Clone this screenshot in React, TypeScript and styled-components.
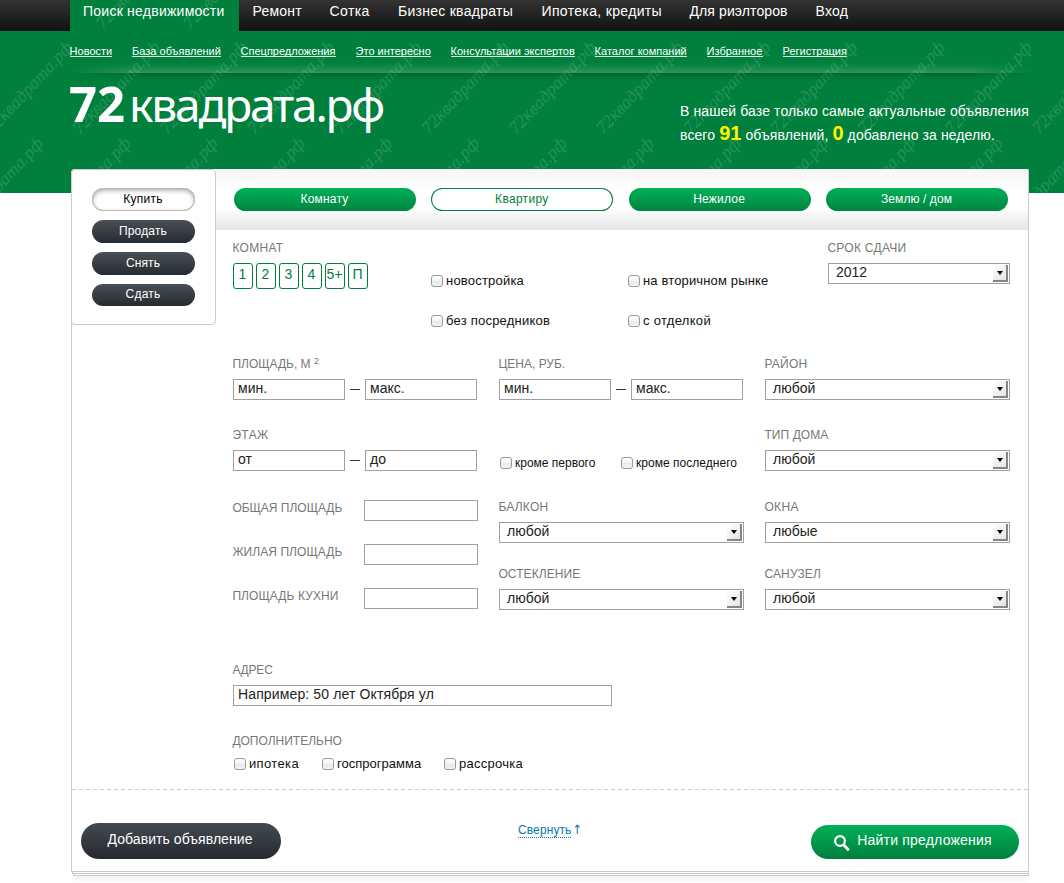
import React from 'react';
import styled, { createGlobalStyle, css } from 'styled-components';

const GREEN = '#00803c';

const GlobalStyle = createGlobalStyle`
  *, *::before, *::after { box-sizing: border-box; }
  body {
    margin: 0;
    background: #fff;
    color: #222;
    font-family: "Liberation Sans", Arial, sans-serif;
    font-size: 14px;
  }
  button, input { font-family: inherit; }
`;

const Page = styled.div`
  position: relative;
  width: 1064px;
  height: 883px;
  overflow: hidden;
  background: linear-gradient(${GREEN} 193px, #fff 193px);
`;

const PatternLayer = styled.svg`
  position: absolute;
  left: 0;
  top: 0;
  pointer-events: none;
  font: italic 18px "Liberation Serif", serif;
  fill: #fff;
  fill-opacity: 0.13;
  stroke: #fff;
  stroke-opacity: 0.05;
  stroke-width: 0.8px;
`;

const Stack = styled.div`
  position: relative;
`;

const TopBar = styled.nav`
  display: flex;
  gap: 28px;
  height: 31px;
  padding-left: 70px;
  background: linear-gradient(#333 0, #111 100%);
`;

const TopLink = styled.a<{ $ls: number; $w: number; $active?: boolean }>`
  position: relative;
  width: ${(p) => p.$w}px;
  padding-top: 3px;
  line-height: 16px;
  letter-spacing: ${(p) => p.$ls}px;
  white-space: nowrap;
  color: #fff;
  ${(p) =>
    p.$active &&
    css`
      width: 169px;
      margin-right: -14.5px;
      padding-left: 13px;
      overflow: hidden;
      background: ${GREEN};
    `}
`;

const SubNav = styled.nav`
  display: flex;
  gap: 20px;
  height: 42px;
  padding: 14px 0 0 69.6px;
`;

const SubLink = styled.a<{ $w: number }>`
  width: ${(p) => p.$w}px;
  height: 12px;
  border-bottom: 1px solid #d9ece1;
  font-size: 11px;
  line-height: 13px;
  white-space: nowrap;
  color: #fff;
`;

const Divider = styled.div`
  height: 18px;
  margin: -10px 30px -8px 70px;
  background: linear-gradient(
    rgba(255, 255, 255, 0) 0,
    rgba(255, 255, 255, 0.17) 10px,
    rgba(0, 40, 10, 0.25) 10px,
    rgba(0, 40, 10, 0) 18px
  );
  mask-image: linear-gradient(90deg, transparent, #000 60px, #000 calc(100% - 60px), transparent);
`;

const Hero = styled.header`
  display: flex;
  justify-content: space-between;
  height: 96px;
  padding: 0 30px 0 69px;
  color: #fff;
`;

const Logo = styled.div`
  display: flex;
  align-items: baseline;
  height: 60px;
  font-family: "Noto Sans", "Open Sans", sans-serif;
  font-size: 46px;
  line-height: 60px;
  letter-spacing: -2.2px;
  white-space: nowrap;
`;

const LogoNumber = styled.b`
  margin-right: 4px;
  font-size: 49px;
  letter-spacing: 0;
`;

const Stats = styled.p`
  width: 354px;
  margin: 26px 0 0;
  line-height: 24px;
  letter-spacing: 0.1px;
  white-space: nowrap;
`;

const StatValue = styled.b`
  font-size: 20px;
  line-height: 20px;
  letter-spacing: 0;
  color: #fff200;
`;

const Panel = styled.main`
  width: 958px;
  height: 703px;
  margin-left: 71px;
  border: 1px solid #ccc;
  border-top: 0;
  border-radius: 4px 2px 0 0;
  background: #fff;
`;

const PanelBody = styled.div`
  display: flex;
  height: 620px;
`;

const SideMenu = styled.aside`
  display: flex;
  flex-direction: column;
  align-items: center;
  gap: 9px;
  width: 145px;
  height: 156px;
  margin-left: -1px;
  padding-top: 18px;
  border: 1px solid #ccc;
  border-radius: 4px;
  background: #fff;
`;

const Pill = styled.button`
  flex: none;
  height: 23px;
  padding: 0 1px 1px 0;
  border: 0;
  border-radius: 12px;
  font-size: 12px;
  line-height: 22px;
  color: #fff;
  text-align: center;
`;

const SideButton = styled(Pill)<{ $active?: boolean; $ls: number }>`
  width: 103px;
  letter-spacing: ${(p) => p.$ls}px;
  background: linear-gradient(#484f55, #262b31);
  &:last-child {
    height: 22px;
    line-height: 21px;
  }
  ${(p) =>
    p.$active &&
    css`
      color: #000;
      background: #fff;
      box-shadow: inset 0 0 0 1px #bbb, inset 0 2px 5px rgba(0, 0, 0, 0.4);
    `}
`;

const Main = styled.section`
  flex: 1;
`;

const TypeTabs = styled.div`
  display: flex;
  justify-content: space-between;
  height: 61px;
  padding: 19px 20px 0 18px;
  background: linear-gradient(#f5f5f5 0, #fff 22px, #fff 38px, #e5e5e5 100%);
`;

const TypeTab = styled(Pill)<{ $active?: boolean; $ls: number }>`
  width: 182px;
  letter-spacing: ${(p) => p.$ls}px;
  background: linear-gradient(#00b058, #008540);
  ${(p) =>
    p.$active &&
    css`
      color: ${GREEN};
      background: #fff;
      box-shadow: inset 0 0 0 1px ${GREEN};
    `}
`;

const Form = styled.form`
  width: 777px;
  margin-left: 17px;
  padding-top: 11px;
`;

const FormRow = styled.div<{ $h: number }>`
  display: grid;
  grid-template-columns: repeat(3, 245px);
  column-gap: 21px;
  height: ${(p) => p.$h}px;
`;

const FirstRow = styled(FormRow)`
  grid-template-columns: 198px 397px 182px;
  column-gap: 0;
`;

const Label = styled.div<{ $ls?: number }>`
  height: 14px;
  margin: 0 0 8px -0.6px;
  font-size: 12px;
  line-height: 14px;
  letter-spacing: ${(p) => p.$ls ?? 0}px;
  white-space: nowrap;
  color: #777;
`;

const Power = styled.span`
  position: relative;
  top: -4px;
  font-size: 9px;
  line-height: 9px;
`;

const Rooms = styled.div`
  display: flex;
  gap: 3px;
`;

const Room = styled.span`
  display: flex;
  justify-content: center;
  width: 20px;
  height: 26px;
  padding-right: 1px;
  border: 1px solid ${GREEN};
  border-radius: 3px;
  line-height: 20px;
  color: ${GREEN};
`;

const CheckGrid = styled.div`
  display: grid;
  grid-template-columns: 197px 200px;
  grid-auto-rows: 40px;
  padding-top: 32px;
`;

const CheckLine = styled.div<{ $top: number; $cols: string }>`
  display: grid;
  grid-template-columns: ${(p) => p.$cols};
  padding: ${(p) => p.$top}px 0 0 1px;
`;

const CheckLabel = styled.label<{ $small?: boolean; $ls: number }>`
  display: flex;
  gap: 3px;
  font-size: ${(p) => (p.$small ? 12 : 13)}px;
  line-height: ${(p) => (p.$small ? 14 : 15)}px;
  letter-spacing: ${(p) => p.$ls}px;
  white-space: nowrap;
  color: #111;
`;

const CheckBox = styled.span<{ $small?: boolean }>`
  flex: none;
  width: 12px;
  height: 12px;
  margin-top: ${(p) => (p.$small ? 1 : 2)}px;
  border: 1px solid #999;
  border-radius: 3px;
  background: linear-gradient(#fff, #f4f4f4 50%, #e9e9e9 55%, #f4f4f4);
`;

const Range = styled.div`
  display: flex;
  justify-content: space-between;
  width: 244px;
`;

const Dash = styled.i`
  width: 10px;
  height: 1px;
  margin-top: 10px;
  margin-right: 1px;
  background: #333;
`;

const TextField = styled.div<{ $w: number; $ls?: number }>`
  width: ${(p) => p.$w}px;
  height: 21px;
  padding-left: 4px;
  border: 1px solid #a0a0a0;
  background: #fff;
  line-height: 16px;
  letter-spacing: ${(p) => p.$ls ?? 0}px;
  white-space: nowrap;
`;

const SelectBox = styled.div`
  display: flex;
  justify-content: space-between;
  height: 21px;
  padding: 0 1px 0 7px;
  border: 1px solid #a0a0a0;
  background: #fff;
  line-height: 16px;
`;

const SelectArrow = styled.span`
  display: flex;
  align-items: center;
  justify-content: center;
  width: 15px;
  height: 17px;
  margin-top: 1px;
  border: solid #868686;
  border-width: 0 2px 2px 0;
  background: linear-gradient(135deg, #fff, #e4e4e4);
  &::before {
    content: '';
    border: solid transparent;
    border-width: 4px 3.5px 0;
    border-top-color: #000;
  }
`;

const AreaList = styled.div`
  display: grid;
  grid-template-columns: 131px 114px;
  grid-auto-rows: 44px;
`;

const AreaLabel = styled(Label)`
  margin-top: 1px;
`;

const PairGrid = styled.div`
  grid-column: span 2;
  display: grid;
  grid-template-columns: 245px 245px;
  grid-auto-rows: 67px;
  column-gap: 21px;
`;

const Footer = styled.footer`
  display: grid;
  grid-template-columns: 437px 293px 208px;
  height: 82px;
  padding: 34px 0 0 9px;
  background: repeating-linear-gradient(90deg, #ccc 0 4px, transparent 4px 7px) top / 100% 1px no-repeat;
`;

const BigButton = styled.button<{ $green?: boolean }>`
  display: flex;
  justify-content: center;
  width: 200px;
  height: 36px;
  padding: 0 2px 0 0;
  border: 0;
  border-radius: 18px;
  background: linear-gradient(#434a51, #26292f);
  font-size: 14px;
  line-height: 32px;
  letter-spacing: 0.06px;
  white-space: nowrap;
  color: #fff;
  ${(p) =>
    p.$green &&
    css`
      width: 208px;
      height: 34px;
      margin-top: 2px;
      gap: 7px;
      padding: 0 4px 0 0;
      background: linear-gradient(#00b058, #007f3d);
      line-height: 30px;
      letter-spacing: 0.2px;
    `}
`;

const SearchIcon = styled.svg`
  margin-top: 9px;
`;

const Collapse = styled.a`
  display: flex;
  gap: 1px;
  font-size: 12px;
  line-height: 14px;
  letter-spacing: 0.1px;
  color: #0a78a8;
`;

const CollapseText = styled.span`
  height: 15px;
  border-bottom: 1px dotted #0a78a8;
`;

const CollapseArrow = styled.span`
  font-family: "DejaVu Sans Condensed", "DejaVu Sans", sans-serif;
  font-size: 13px;
`;

const Sheet = styled.div<{ $inset: number }>`
  width: ${(p) => 958 - p.$inset}px;
  height: 2px;
  margin-left: ${(p) => 71 + p.$inset}px;
  border: 1px solid #ccc;
  border-top: 0;
  border-bottom-color: #c8c8c8;
  background: #fff;
`;

const LastSheet = styled(Sheet)`
  box-shadow: 0 3px 4px rgba(0, 0, 0, 0.12);
`;

const STEP = 87.2;

function Pattern({ width, height, rows }: { width: number; height: number; rows: [number, number][] }) {
  const marks = rows.flatMap(([x, y]) =>
    Array.from({ length: 15 }, (_, i) => [x + (i - 2) * STEP, y] as const),
  ).filter(([x]) => x < width + 20);
  return (
    <PatternLayer width={width} height={height} aria-hidden="true">
      {marks.map(([x, y]) => (
        <text key={`${x}-${y}`} transform={`translate(${x} ${y}) rotate(-47)`}>
          72квадрата.рф
        </text>
      ))}
    </PatternLayer>
  );
}

function Select({ label, value, ls }: { label: string; value: string; ls?: number }) {
  return (
    <div>
      <Label $ls={ls}>{label}</Label>
      <SelectBox>
        {value}
        <SelectArrow />
      </SelectBox>
    </div>
  );
}

function Check({ text, ls = 0, small }: { text: string; ls?: number; small?: boolean }) {
  return (
    <CheckLabel $small={small} $ls={ls}>
      <CheckBox $small={small} />
      {text}
    </CheckLabel>
  );
}

function RangeField({ from, to }: { from: string; to: string }) {
  return (
    <Range>
      <TextField $w={112}>{from}</TextField>
      <Dash />
      <TextField $w={112}>{to}</TextField>
    </Range>
  );
}

const topLinks: [string, number, number][] = [
  ['Ремонт', 49, 0.2],
  ['Сотка', 40.5, 0.4],
  ['Бизнес квадраты', 115.5, 0.27],
  ['Ипотека, кредиты', 120, 0.34],
  ['Для риэлторов', 98, 0.1],
  ['Вход', 33, 0.25],
];

const subLinks: [string, number][] = [
  ['Новости', 42.5],
  ['База объявлений', 88.5],
  ['Спецпредложения', 95],
  ['Это интересно', 75],
  ['Консультации экспертов', 124],
  ['Каталог компаний', 92],
  ['Избранное', 56],
  ['Регистрация', 64],
];

const deals: [string, number][] = [
  ['Купить', 0.3],
  ['Продать', 0.16],
  ['Снять', 0.1],
  ['Сдать', 0.23],
];

const types: [string, number][] = [
  ['Комнату', 0.2],
  ['Квартиру', 0.3],
  ['Нежилое', 0.2],
  ['Землю / дом', 0.08],
];

export default function App() {
  return (
    <>
      <GlobalStyle />
      <Page>
        <Pattern width={1064} height={193} rows={[[80, 135], [50.7, 231]]} />
        <Stack>
          <TopBar>
            <TopLink $active $w={169} $ls={0.24}>
              <Pattern width={169} height={31} rows={[[33, 30]]} />
              Поиск недвижимости
            </TopLink>
            {topLinks.map(([text, w, ls]) => (
              <TopLink key={text} $w={w} $ls={ls}>
                {text}
              </TopLink>
            ))}
          </TopBar>
          <SubNav>
            {subLinks.map(([text, w]) => (
              <SubLink key={text} $w={w}>
                {text}
              </SubLink>
            ))}
          </SubNav>
          <Divider />
          <Hero>
            <Logo>
              <LogoNumber>72</LogoNumber>квадрата.рф
            </Logo>
            <Stats>
              В нашей базе только самые актуальные объявления
              <br />
              всего <StatValue>91</StatValue> объявлений, <StatValue>0</StatValue> добавлено за неделю.
            </Stats>
          </Hero>
          <Panel>
            <PanelBody>
              <SideMenu>
                {deals.map(([text, ls], i) => (
                  <SideButton key={text} $ls={ls} $active={i === 0}>
                    {text}
                  </SideButton>
                ))}
              </SideMenu>
              <Main>
                <TypeTabs>
                  {types.map(([text, ls], i) => (
                    <TypeTab key={text} $ls={ls} $active={i === 1}>
                      {text}
                    </TypeTab>
                  ))}
                </TypeTabs>
                <Form>
                  <FirstRow $h={116}>
                    <div>
                      <Label $ls={0.29}>КОМНАТ</Label>
                      <Rooms>
                        {['1', '2', '3', '4', '5+', 'П'].map((n) => (
                          <Room key={n}>{n}</Room>
                        ))}
                      </Rooms>
                    </div>
                    <CheckGrid>
                      <Check text="новостройка" ls={0.2} />
                      <Check text="на вторичном рынке" ls={0.15} />
                      <Check text="без посредников" ls={0.22} />
                      <Check text="с отделкой" ls={0.31} />
                    </CheckGrid>
                    <Select label="СРОК СДАЧИ" value="2012" ls={0.27} />
                  </FirstRow>
                  <FormRow $h={71}>
                    <div>
                      <Label>
                        ПЛОЩАДЬ, М <Power>2</Power>
                      </Label>
                      <RangeField from="мин." to="макс." />
                    </div>
                    <div>
                      <Label>ЦЕНА, РУБ.</Label>
                      <RangeField from="мин." to="макс." />
                    </div>
                    <Select label="РАЙОН" value="любой" ls={0.23} />
                  </FormRow>
                  <FormRow $h={72}>
                    <div>
                      <Label $ls={0.34}>ЭТАЖ</Label>
                      <RangeField from="от" to="до" />
                    </div>
                    <CheckLine $top={28} $cols="121px 122px">
                      <Check small text="кроме первого" />
                      <Check small text="кроме последнего" ls={0.03} />
                    </CheckLine>
                    <Select label="ТИП ДОМА" value="любой" ls={0.08} />
                  </FormRow>
                  <FormRow $h={163}>
                    <AreaList>
                      <AreaLabel>ОБЩАЯ ПЛОЩАДЬ</AreaLabel>
                      <TextField $w={114} />
                      <AreaLabel $ls={0.07}>ЖИЛАЯ ПЛОЩАДЬ</AreaLabel>
                      <TextField $w={114} />
                      <AreaLabel $ls={0.09}>ПЛОЩАДЬ КУХНИ</AreaLabel>
                      <TextField $w={114} />
                    </AreaList>
                    <PairGrid>
                      <Select label="БАЛКОН" value="любой" ls={0.23} />
                      <Select label="ОКНА" value="любые" ls={0.35} />
                      <Select label="ОСТЕКЛЕНИЕ" value="любой" ls={0.09} />
                      <Select label="САНУЗЕЛ" value="любой" ls={0.15} />
                    </PairGrid>
                  </FormRow>
                  <FormRow $h={71}>
                    <div>
                      <Label $ls={-0.2}>АДРЕС</Label>
                      <TextField $w={379} $ls={0.13}>
                        Например: 50 лет Октября ул
                      </TextField>
                    </div>
                  </FormRow>
                  <Label>ДОПОЛНИТЕЛЬНО</Label>
                  <CheckLine $top={0} $cols="88px 122px 100px">
                    <Check text="ипотека" ls={0.36} />
                    <Check text="госпрограмма" ls={0.02} />
                    <Check text="рассрочка" ls={0.27} />
                  </CheckLine>
                </Form>
              </Main>
            </PanelBody>
            <Footer>
              <BigButton>Добавить объявление</BigButton>
              <Collapse>
                <CollapseText>Свернуть</CollapseText>
                <CollapseArrow>↑</CollapseArrow>
              </Collapse>
              <BigButton $green>
                <SearchIcon width="16" height="18" viewBox="0 0 16 18" fill="none" stroke="#fff">
                  <circle cx="6" cy="7" r="4.9" strokeWidth="2.2" />
                  <path d="M9.3 10.5 L14.8 16.2" strokeWidth="2.8" />
                </SearchIcon>
                Найти предложения
              </BigButton>
            </Footer>
          </Panel>
          <Sheet $inset={1} />
          <LastSheet $inset={2} />
        </Stack>
      </Page>
    </>
  );
}
